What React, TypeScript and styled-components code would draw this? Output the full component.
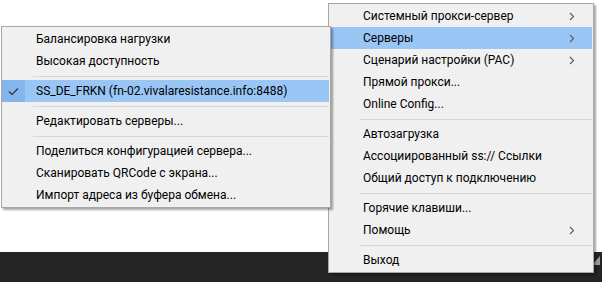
import React from "react";
import styled, { createGlobalStyle } from "styled-components";

const Global = createGlobalStyle`
  html, body { margin: 0; padding: 0; background: #ffffff; }
  body { font-family: Roboto, "Noto Sans", sans-serif; }
  * { box-sizing: border-box; }
`;

const Desktop = styled.div`
  position: relative;
  width: 602px;
  height: 282px;
  display: flex;
  flex-direction: column;
  overflow: hidden;
`;

const Workspace = styled.div`
  flex: 1;
  background: #ffffff;
`;

const Taskbar = styled.div`
  height: 30px;
  background: #252525;
  display: flex;
  justify-content: flex-end;
  align-items: center;
  padding-right: 2px;
`;

const Menu = styled.div<{ $left: number; $top: number; $width: number; $z: number }>`
  position: absolute;
  left: ${(p) => p.$left}px;
  top: ${(p) => p.$top}px;
  width: ${(p) => p.$width}px;
  z-index: ${(p) => p.$z};
  background: #f0f0f0;
  border: 1px solid #a7a7a7;
  padding: 1px 1px 1px 0;
  box-shadow: 2px 2px 2px rgba(0, 0, 0, 0.35);
  display: flex;
  flex-direction: column;
`;

const Row = styled.div<{ $active?: boolean }>`
  height: 22px;
  display: grid;
  grid-template-columns: 34px 1fr 24px;
  align-items: center;
  background: ${(p) => (p.$active ? "#99c6f5" : "transparent")};
  color: #000000;
  font-size: 12px;
  white-space: nowrap;
`;

const CheckCell = styled.div<{ $on?: boolean }>`
  height: 22px;
  width: 23px;
  display: flex;
  align-items: center;
  justify-content: center;
  background: ${(p) => (p.$on ? "#84b5ee" : "transparent")};
`;

const Label = styled.span`
  line-height: 22px;
`;

const Arrow = styled.div`
  display: flex;
  align-items: center;
  justify-content: flex-start;
  padding-left: 1px;
`;

const Separator = styled.div`
  height: 8px;
  display: flex;
  align-items: center;
  padding-left: 31px;
  &::after {
    content: "";
    flex: 1;
    height: 1px;
    background: #d7d7d7;
  }
`;

const Chevron = () => (
  <svg width="6" height="9" viewBox="0 0 6 9">
    <polyline points="1,1 4.5,4.5 1,8" fill="none" stroke="#5a5a5a" strokeWidth="1.1" />
  </svg>
);

const Check = () => (
  <svg width="11" height="9" viewBox="0 0 11 9">
    <polyline points="1,4.5 4,7.5 10,1.5" fill="none" stroke="#333" strokeWidth="1.2" />
  </svg>
);

type Item =
  | { kind: "item"; label: string; sub?: boolean; active?: boolean; checked?: boolean }
  | { kind: "sep" };

const leftItems: Item[] = [
  { kind: "item", label: "Балансировка нагрузки" },
  { kind: "item", label: "Высокая доступность" },
  { kind: "sep" },
  { kind: "item", label: "SS_DE_FRKN (fn-02.vivalaresistance.info:8488)", active: true, checked: true },
  { kind: "sep" },
  { kind: "item", label: "Редактировать серверы..." },
  { kind: "sep" },
  { kind: "item", label: "Поделиться конфигурацией сервера..." },
  { kind: "item", label: "Сканировать QRCode с экрана..." },
  { kind: "item", label: "Импорт адреса из буфера обмена..." },
];

const rightItems: Item[] = [
  { kind: "item", label: "Системный прокси-сервер", sub: true },
  { kind: "item", label: "Серверы", sub: true, active: true },
  { kind: "item", label: "Сценарий настройки (PAC)", sub: true },
  { kind: "item", label: "Прямой прокси..." },
  { kind: "item", label: "Online Config..." },
  { kind: "sep" },
  { kind: "item", label: "Автозагрузка" },
  { kind: "item", label: "Ассоциированный ss:// Ссылки" },
  { kind: "item", label: "Общий доступ к подключению" },
  { kind: "sep" },
  { kind: "item", label: "Горячие клавиши..." },
  { kind: "item", label: "Помощь", sub: true },
  { kind: "sep" },
  { kind: "item", label: "Выход" },
];

const MenuList = ({ items }: { items: Item[] }) => (
  <>
    {items.map((it, i) =>
      it.kind === "sep" ? (
        <Separator key={i} />
      ) : (
        <Row key={i} $active={it.active}>
          <CheckCell $on={it.checked}>{it.checked ? <Check /> : null}</CheckCell>
          <Label>{it.label}</Label>
          <Arrow>{it.sub ? <Chevron /> : null}</Arrow>
        </Row>
      )
    )}
  </>
);

const TrayGlyph = styled.div`
  margin-top: -12px;
  display: flex;
`;

export default function App() {
  return (
    <Desktop>
      <Global />
      <Workspace />
      <Taskbar>
        <TrayGlyph>
          <svg width="8" height="10" viewBox="0 0 8 10">
            <polygon points="8,0 8,9 0,9" fill="#9a9a9a" />
          </svg>
        </TrayGlyph>
      </Taskbar>
      <Menu $left={328} $top={3} $width={266} $z={1}>
        <MenuList items={rightItems} />
      </Menu>
      <Menu $left={1} $top={26} $width={330} $z={2}>
        <MenuList items={leftItems} />
      </Menu>
    </Desktop>
  );
}
